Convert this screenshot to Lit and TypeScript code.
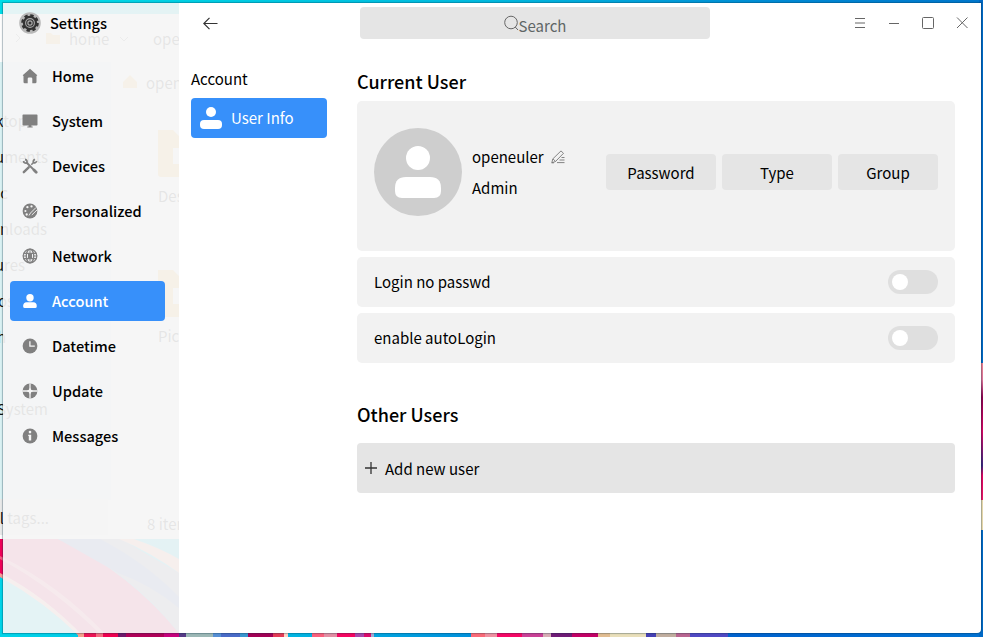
import { LitElement, html, svg, css } from "lit";
import { customElement, property } from "lit/decorators.js";

const person = svg`<circle cx="7.5" cy="4.2" r="3.7"/><path d="M4 8.7h7c2 0 3.2 1.4 3.2 3.2v1q0 1.6-1.6 1.6H2.2Q.7 14.5.7 12.9v-1C.7 10.100 2 8.700 4 8.700Z"/>`;

const icons: Record<string, unknown> = {
  Home: svg`<path d="M7.500.2 14.800 6.800 14 7.600V13.500Q14 14.800 12.700 14.800H9.800V10.300Q9.800 8.900 8.500 8.900H6.500Q5.200 8.900 5.200 10.300V14.800H2.300Q1 14.800 1 13.500V7.600L.2 6.800Z"/>`,
  System: svg`<path d="M.8 1H14.200Q15 1 15 1.800V11.200Q15 12 14.200 12H8.900V13.100H10.200V14H4.800V13.100H6.100V12H.8Q0 12 0 11.200V1.800Q0 1 .8 1Z"/>`,
  Devices: svg`<g fill="none" stroke="currentColor"><path d="M4 4 12.600 12.600" stroke-width="2"/><path d="M11.500 11.500 13.700 13.700" stroke-width="2.800" stroke-linecap="round"/><path d="M1.300 13.700 6.200 8.800" stroke-width="2.400" stroke-linecap="round"/><path d="M8.800 6.200 11 4" stroke-width="1.600"/><path d="M1 2.500Q1.500 5.200 4.300 4.400 5.200 1.500 2.500 1" stroke-width="1.800"/><path d="M12.400.8Q9.800 2.600 11.200 4 12.600 5.200 14.300 2.600" stroke-width="1.700"/></g>`,
  Personalized: svg`<circle cx="7.500" cy="7.500" r="7.400"/><g fill="#f5f5f5"><circle cx="4.900" cy="3.700" r="1.150"/><circle cx="9" cy="2.900" r="1.150"/><circle cx="2.900" cy="7.500" r="1.050"/><circle cx="4.200" cy="11" r="1.150"/></g><path d="M6.500 12 8 9.500 13.500 4M9.300 11.500 14.500 6.500" fill="none" stroke="#f5f5f5" stroke-width=".9"/>`,
  Network: svg`<circle cx="7.500" cy="7.500" r="6.800" fill="none" stroke="currentColor" stroke-width="1.300"/><ellipse cx="7.500" cy="7.500" rx="3.700" ry="6.900" fill="none" stroke="currentColor" stroke-width="1.400"/><path d="M5.500 5.500H9.500V9.500H5.500ZM7 .5H8V5H7ZM7 10H8V14.500H7ZM1 4.300H14V5.500H1ZM1 9.500H14V10.700H1ZM.5 6.900H4.500V8.100H.5ZM10.500 6.900H14.500V8.100H10.500Z"/>`,
  Account: person,
  Datetime: svg`<circle cx="7.500" cy="7.500" r="7.400"/><path d="M7.400 2.700V7.700H12.300" fill="none" stroke="#f5f5f5" stroke-width="1.300"/>`,
  Update: svg`<circle cx="7.500" cy="7.500" r="7.400"/><path d="M7.500 0V15M0 7.500H15" stroke="#f5f5f5" stroke-width="1.300"/><path d="M7.500 4.200 8.700 6.300 10.800 7.500 8.700 8.700 7.500 10.800 6.300 8.700 4.200 7.500 6.300 6.300Z" fill="#f5f5f5"/>`,
  Messages: svg`<circle cx="7.500" cy="7.500" r="7.400"/><circle cx="7.500" cy="3.600" r="1.300" fill="#f5f5f5"/><path d="M5.700 6.200H8.700V12H6.300V7.400H5.700Z" fill="#f5f5f5"/>`,
};

@customElement("desk-backdrop")
class DeskBackdrop extends LitElement {
  static styles = css`
    :host { display: block; }
    svg { display: block; width: 983px; height: 637px; }
    text { font: 400 15px "Noto Sans CJK SC", sans-serif; fill: #101010; }
    .end { text-anchor: end; }
  `;
  render() {
    const places: [string, number, number][] = [
      ["Desktop", 27, 127], ["Documents", 48, 163], ["Music", 8, 199], ["Downloads", 47, 235],
      ["Pictures", 25, 271], ["Videos", 14, 307], ["Trash", 6, 343], ["System", 48, 415], ["All tags...", 49, 524],
    ];
    const strip: [number, number, string][] = [
      [78, 84, "#f6a08c"], [84, 96, "#ed1455"], [96, 103, "#f46a80"], [103, 118, "#f00050"], [118, 126, "#70186a"],
      [126, 164, "#b00058"], [164, 179, "#c8007c"], [179, 186, "#563a86"], [186, 213, "#9cb8b6"], [213, 221, "#568fd4"],
      [221, 240, "#4a6bc8"], [240, 248, "#3996cf"], [248, 273, "#a20055"], [273, 284, "#e33b56"], [284, 288, "#ffd3c5"],
      [312, 324, "#fa607d"], [324, 337, "#e28fa4"], [337, 355, "#f50561"], [355, 364, "#a747ac"], [364, 371, "#dc0b6c"], [371, 374, "#a2a9d1"],
      [471, 485, "#fa6a78"], [485, 497, "#ef91a1"], [497, 522, "#f60765"], [522, 543, "#ca4096"], [543, 551, "#d7adb5"],
      [551, 572, "#701b76"], [572, 598, "#c40065"], [598, 610, "#e2bd91"], [610, 646, "#e9dfba"], [646, 656, "#4640b3"],
      [656, 676, "#c1ae9f"], [676, 690, "#b96591"], [690, 728, "#5149c4"],
    ];
    return html`<svg viewBox="0 0 983 637">
      <defs>
        <linearGradient id="sky"><stop stop-color="#00dde8"/><stop offset=".5" stop-color="#00b9df"/><stop offset=".8" stop-color="#0089d4"/><stop offset="1" stop-color="#0077cc"/></linearGradient>
        <linearGradient id="floor"><stop stop-color="#00d4e9"/><stop offset=".3" stop-color="#00b4e2"/><stop offset=".48" stop-color="#0090dc"/><stop offset=".75" stop-color="#0062ce"/><stop offset="1" stop-color="#0072d2"/></linearGradient>
        <linearGradient id="edge" x2="0" y2="1"><stop stop-color="#f08090"/><stop offset=".12" stop-color="#e0769a"/><stop offset=".25" stop-color="#8f004e"/><stop offset=".5" stop-color="#d90463"/><stop offset=".75" stop-color="#3b267e"/><stop offset=".82" stop-color="#e5005f"/><stop offset="1" stop-color="#ef1665"/></linearGradient>
      </defs>
      <rect width="983" height="500" fill="url(#sky)"/>
      <rect y="500" width="983" height="137" fill="url(#floor)"/>
      <rect x="979" y="0" width="4" height="637" fill="#0069c6"/>
      <rect x="979" y="363" width="4" height="137" fill="url(#edge)"/>
      <rect x="979" y="500" width="4" height="30" fill="#ecdcae"/>
      <path d="M0 539H60Q130 573 179 633H78Q50 604 0 576Z" fill="#f00058"/>
      <path d="M0 573Q45 596 84 637H80Q45 602 0 577Z" fill="#f89a94"/>
      <path d="M0 556Q60 585 108 637H103Q54 588 0 559Z" fill="#f55a80"/>
      <path d="M58 539H121Q150 556 179 573V633Q131 572 58 539Z" fill="#7c7c9c"/>
      <path d="M58 539H100Q146 563 179 597V608Q150 584 118 573Z" fill="#4866b8"/>
      <path d="M119 539H134Q160 548 179 559V573Q150 552 119 539Z" fill="#f49a86"/>
      ${strip.map(([a, b, c]) => svg`<rect x=${a} y="633" width=${b - a} height="4" fill=${c}/>`)}
      <rect y="14" width="181" height="525" fill="#fdfdfd"/>
      <rect y="62" width="111" height="438" fill="#d9f1f3"/>
      <rect y="499" width="108" height="36" fill="#e9e9e9"/>
      <path d="M16 34 20 38 16 42M120 37 124 41 128 37" fill="none" stroke="#777"/>
      <path d="M46 33H51L53 35H60V44H46ZM123 82 130 75 137 82V88H123Z" fill="#ffb848"/>
      <g fill="#fab040"><path d="M158 130H173L180 137V177H161Q158 177 158 174ZM158 270H173L180 277V317H161Q158 317 158 314Z"/></g>
      <g fill="#fff"><path d="M173 148H181V164H173ZM173 288H181V304H173Z"/></g>
      ${places.map(([t, x, y]) => svg`<text class="end" x=${x} y=${y}>${t}</text>`)}
      <text x="69" y="45">home</text><text x="153" y="45">openeuler</text><text x="146" y="89">openeuler</text>
      <text x="158" y="202">Desktop</text><text x="158" y="342">Pictures</text><text x="147" y="530">8 items</text>
    </svg>`;
  }
}

@customElement("toggle-row")
class ToggleRow extends LitElement {
  @property() label = "";
  static styles = css`
    :host { display: flex; align-items: center; justify-content: space-between; height: 50px; padding: 0 17px; box-sizing: border-box; background: #f2f2f2; border-radius: 5px; }
    .track { width: 50px; height: 24px; border-radius: 12px; background: #dfdfdf; padding: 4px; box-sizing: border-box; }
    .knob { width: 16px; height: 16px; border-radius: 50%; background: #fff; }
  `;
  render() {
    return html`<span>${this.label}</span><div class="track"><div class="knob"></div></div>`;
  }
}

@customElement("app-root")
class AppRoot extends LitElement {
  static styles = css`
    :host { display: block; position: relative; box-sizing: border-box; width: 983px; height: 637px; padding: 3px 2px 4px 3px; overflow: hidden; font: 400 15px/24px "Noto Sans CJK SC", sans-serif; color: #000; }
    desk-backdrop { position: absolute; inset: 0; }
    svg { display: block; flex: none; }
    .window { position: relative; display: flex; height: 630px; border-radius: 0 0 4px 0; overflow: hidden; box-shadow: 0 0 1px 1px rgba(0,40,60,.3); }
    .side { flex: none; width: 176px; box-sizing: border-box; background: rgba(245,245,245,.93); padding: 0 14px 0 7px; font-weight: 500; font-size: 14.600px; }
    .brand { display: flex; align-items: center; height: 40px; padding-left: 9px; gap: 9px; margin-bottom: 13px; }
    .nav { display: flex; flex-direction: column; gap: 5px; }
    .item { display: flex; align-items: center; height: 40px; padding-left: 12px; gap: 14px; border-radius: 4px; }
    .item svg { color: #808080; fill: #808080; }
    .item.on { background: #3790fa; color: #fff; }
    .item.on svg { fill: #fff; }
    .sub { flex: none; width: 178px; box-sizing: border-box; background: #fff; padding: 10px 30px 0 12px; }
    .back { height: 20px; padding-left: 12px; }
    .subtitle { margin: 34px 0 7px; }
    .pill { display: flex; align-items: center; height: 40px; border-radius: 4px; background: #3790fa; color: #fff; padding-left: 9px; gap: 9px; box-sizing: border-box; }
    .main { flex: 1; min-width: 0; background: #fff; padding: 4px 26px 0 0; }
    .bar { display: flex; align-items: center; height: 32px; padding-left: 3px; margin-right: -26px; }
    .search { flex: none; display: flex; align-items: center; justify-content: center; width: 350px; height: 32px; border-radius: 4px; background: #e5e5e5; color: #5f6565; }
    .search span { padding-top: 5px; }
    .controls { margin-left: 144px; }
    h2 { margin: 0; font-weight: 500; font-size: 18px; line-height: 28px; }
    .current { margin: 28px 0 6px; }
    .card { display: flex; align-items: flex-start; height: 150px; box-sizing: border-box; border-radius: 5px; background: #f2f2f2; padding: 27px 17px 0; }
    .who { flex: none; margin: 17px 0 0 10px; display: flex; flex-direction: column; gap: 7px; width: 134px; }
    .name { display: flex; align-items: center; gap: 7px; }
    .acts { display: flex; gap: 6px; margin-top: 26px; }
    .btn { width: 110px; height: 36px; border-radius: 4px; background: #e5e5e5; display: flex; align-items: center; justify-content: center; padding-top: 2px; box-sizing: border-box; }
    .btn.last { width: 100px; }
    .rows { display: flex; flex-direction: column; gap: 6px; margin-top: 6px; }
    .others { margin: 37px 0 15px; }
    .add { display: flex; align-items: center; gap: 8px; height: 50px; padding-left: 8px; background: #e5e5e5; border-radius: 4px; }
    .add svg { margin-top: -1px; }
    .add span { padding-top: 2px; }
  `;
  render() {
    return html`
      <desk-backdrop></desk-backdrop>
      <div class="window">
        <div class="side">
          <div class="brand">
            <svg width="22" height="22" viewBox="0 0 22 22"><circle cx="11" cy="11" r="10.800" fill="#b9b9b9"/><circle cx="11" cy="11" r="7.200" fill="#333"/><circle cx="11" cy="11" r="7.600" fill="none" stroke="#333" stroke-width="2.400" stroke-dasharray="3.400 2.570"/><circle cx="11" cy="11" r="4.400" fill="none" stroke="#aaa" stroke-width="1.100"/><circle cx="11" cy="11" r="2.100" fill="none" stroke="#aaa" stroke-width="1.200"/></svg>
            <span>Settings</span>
          </div>
          <div class="nav">
            ${Object.entries(icons).map(([name, icon]) => html`<div class="item ${name === "Account" ? "on" : ""}"><svg width="16" height="16" viewBox="-.5 -.5 16 16">${icon}</svg><span>${name}</span></div>`)}
          </div>
        </div>
        <div class="sub">
          <div class="back"><svg width="15" height="20" viewBox="0 0 15 20" fill="none" stroke="#333" stroke-width="1.200"><path d="M14.500 10.500H.8M6.500 4.800.8 10.500 6.500 16.200"/></svg></div>
          <div class="subtitle">Account</div>
          <div class="pill">
            <svg width="22" height="22" viewBox="0 0 22 22" fill="#fff"><circle cx="11" cy="5" r="5"/><rect y="13" width="22" height="9" rx="4"/></svg>
            <span>User Info</span>
          </div>
        </div>
        <div class="main">
          <div class="bar">
            <div class="search">
              <svg width="15" height="16" viewBox="0 0 15 16" fill="none" stroke="#666"><circle cx="7" cy="7.500" r="6.300"/><path d="M11.200 12 14 15"/></svg>
              <span>Search</span>
            </div>
            <svg class="controls" width="116" height="16" viewBox="0 0 116 16" fill="none" stroke="#666"><path d="M1 3.500H11M1 8H11M1 12.500H11M35 8.500H45"/><rect x="68.500" y="2.500" width="11" height="11" rx="1"/><path d="M103 2.500 113.500 13M113.500 2.500 103 13"/></svg>
          </div>
          <h2 class="current">Current User</h2>
          <div class="card">
            <svg width="88" height="88" viewBox="0 0 88 88"><circle cx="44" cy="44" r="44" fill="#cecece"/><circle cx="44" cy="30" r="12" fill="#fff"/><path d="M32 49H56Q67 49 67 60V63Q67 70 60 70H28Q21 70 21 63V60Q21 49 32 49Z" fill="#fff"/></svg>
            <div class="who">
              <div class="name"><span>openeuler</span><svg width="14" height="14" viewBox="0 0 14 14" fill="none" stroke="#777" stroke-width=".9"><path d="M.8 12.800 1.800 8.900 10 .9 12.500 3.300 4.500 11.500ZM2 8.900 4.500 11.400M.8 12.800H3M10.500 7.500H13.500M8.500 10H13.500M6 12.600H13.500"/></svg></div>
              <div>Admin</div>
            </div>
            <div class="acts"><div class="btn">Password</div><div class="btn">Type</div><div class="btn last">Group</div></div>
          </div>
          <div class="rows">
            <toggle-row label="Login no passwd"></toggle-row>
            <toggle-row label="enable autoLogin"></toggle-row>
          </div>
          <h2 class="others">Other Users</h2>
          <div class="add"><svg width="12" height="12" viewBox="0 0 12 12" stroke="#333" stroke-width="1.300"><path d="M6 0V12M0 6H12"/></svg><span>Add new user</span></div>
        </div>
      </div>`;
  }
}
